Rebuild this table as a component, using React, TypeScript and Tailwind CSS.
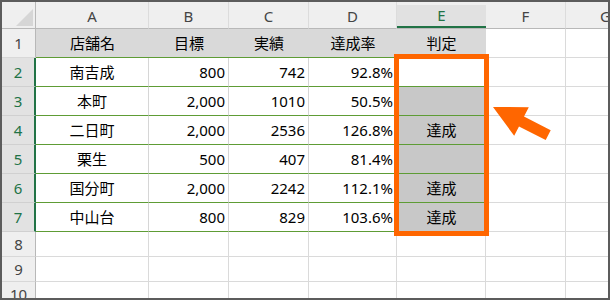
import React from "react";

type Row = {
  n: number;
  kind: "title" | "data" | "empty";
  cells?: string[];
  fill?: boolean;
};

const colWidths = [113, 80, 80, 88, 89, 80, 80];
const letters = ["A", "B", "C", "D", "E", "F", "G"];

const rows: Row[] = [
  { n: 1, kind: "title", cells: ["店舗名", "目標", "実績", "達成率", "判定"] },
  { n: 2, kind: "data", cells: ["南吉成", "800", "742", "92.8%", ""], fill: false },
  { n: 3, kind: "data", cells: ["本町", "2,000", "1010", "50.5%", ""], fill: true },
  { n: 4, kind: "data", cells: ["二日町", "2,000", "2536", "126.8%", "達成"], fill: true },
  { n: 5, kind: "data", cells: ["栗生", "500", "407", "81.4%", ""], fill: true },
  { n: 6, kind: "data", cells: ["国分町", "2,000", "2242", "112.1%", "達成"], fill: true },
  { n: 7, kind: "data", cells: ["中山台", "800", "829", "103.6%", "達成"], fill: true },
  { n: 8, kind: "empty" },
  { n: 9, kind: "empty" },
  { n: 10, kind: "empty" },
];

const font = { fontFamily: '"Noto Sans", "Noto Sans CJK JP", sans-serif' };

function RowHeader({ row }: { row: Row }) {
  if (row.kind === "data") {
    return (
      <div className="flex items-center justify-center bg-[#e2e2e2] border-b border-[#d0d0d0] border-r-2 border-r-[#217346] text-[#217346] text-[15px]">
        {row.n}
      </div>
    );
  }
  return (
    <div className="flex items-center justify-center bg-[#efefef] border-b border-[#d8d8d8] border-r border-r-[#b8b8b8] text-[#444] text-[15px]">
      {row.n}
    </div>
  );
}

function Cell({ row, col }: { row: Row; col: number }) {
  const text = row.cells ? row.cells[col] ?? "" : "";
  if (row.kind === "title" && col < 5) {
    return (
      <div className="flex items-center justify-center bg-[#d9d9d9] border-b border-[#5e9c35] text-[15px] text-black">
        {text}
      </div>
    );
  }
  if (row.kind === "data" && col < 4) {
    const right = col > 0;
    return (
      <div
        className={
          right
            ? "flex items-center justify-end pr-[3px] bg-white border-r border-[#d6d6d6] border-b border-b-[#5e9c35] text-[15px] text-black"
            : "flex items-center justify-center bg-white border-r border-[#d6d6d6] border-b border-b-[#5e9c35] text-[15px] text-black"
        }
      >
        {text}
      </div>
    );
  }
  if (row.kind === "data" && col === 4) {
    return (
      <div
        className={
          row.fill
            ? "flex items-center justify-center bg-[#c8c8c8] border-b border-[#5e9c35] text-[15px] text-black"
            : "flex items-center justify-center bg-white border-b border-[#5e9c35] text-[15px] text-black"
        }
      >
        {text}
      </div>
    );
  }
  return <div className="bg-white border-r border-b border-[#dadada]" />;
}

export default function App() {
  return (
    <div
      className="relative w-[610px] h-[300px] overflow-hidden border-2 border-[#5c5c5c] bg-white"
      style={font}
    >
      <div className="grid grid-cols-[34px_113px_80px_80px_88px_89px_80px_80px] grid-rows-[27px_repeat(7,29px)_25px_25px_25px]">
        {/* select-all corner */}
        <div className="relative bg-[#efefef] border-r border-b border-[#b8b8b8]">
          <svg className="absolute left-0 top-0" width="34" height="27">
            <polygon points="14,24 31,24 31,7" fill="#d6d6d6" />
          </svg>
        </div>
        {letters.map((l, i) =>
          i === 4 ? (
            <div key={l} className="pt-[3px] bg-[#efefef] border-b border-[#b8b8b8]">
              <div className="h-full flex items-center justify-center bg-[#e1e1e1] border-b-2 border-[#217346] text-[#217346] text-[15px]">
                {l}
              </div>
            </div>
          ) : (
            <div
              key={l}
              className="flex items-center justify-center pt-[3px] bg-[#efefef] border-r border-r-[#dcdcdc] border-b border-b-[#b8b8b8] text-[#444] text-[15px]"
            >
              {l}
            </div>
          )
        )}
        {rows.map((row) => (
          <React.Fragment key={row.n}>
            <RowHeader row={row} />
            {colWidths.map((_, ci) => (
              <Cell key={ci} row={row} col={ci} />
            ))}
          </React.Fragment>
        ))}
      </div>

      {/* highlight frame around the 判定 column */}
      <div className="absolute left-[392px] top-[52px] w-[95px] h-[182px] border-[5px] border-[#ff6600]" />

      {/* pointer arrow */}
      <svg className="absolute left-0 top-0" width="610" height="300" style={{ marginLeft: -2, marginTop: -2 }}>
        <polygon
          points="493,107 528.8,107.2 524,116.6 550.7,130.2 545.7,140 519,126.4 514.2,135.8"
          fill="#ff6600"
        />
      </svg>
    </div>
  );
}
